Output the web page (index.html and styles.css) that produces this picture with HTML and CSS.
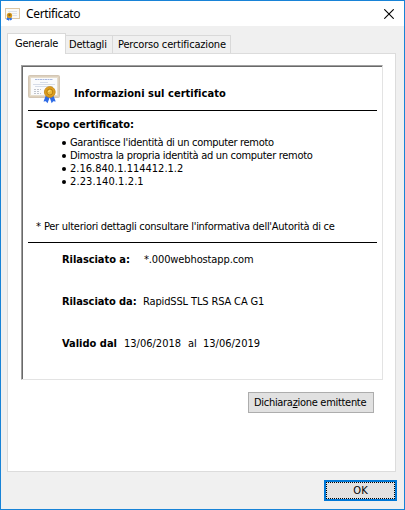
FILE: index.html
```html
<!DOCTYPE html>
<html lang="it">
<head>
<meta charset="utf-8">
<title>Certificato</title>
<link rel="stylesheet" href="styles.css">
</head>
<body>
<div class="window">
  <header class="titlebar">
    <svg class="small-icon" viewBox="0 0 16 14"><rect x=".5" y=".5" width="14" height="10" fill="#fbfaf7" stroke="#ddc7a4"/><path d="M3 3.500h9M7 5.500h5M8 7.500h4" stroke="#dfe2e8"/><path d="m2.500 8-1 4h1.500l1 1 .5-2 1 1.500 1.500-1-1-3.500z" fill="#2f72e8"/><circle cx="4.500" cy="7.500" r="2.700" fill="#d99b20"/><circle cx="4.500" cy="7" r="1.200" fill="#8d6a22"/></svg>
    <h1 class="title">Certificato</h1>
    <svg class="close" viewBox="0 0 10 10"><path d="m.3.3 9.400 9.400M9.700.3.300 9.700" stroke="#000" stroke-width="1.100"/></svg>
  </header>
  <nav class="tabs">
    <span class="tab active"><span class="t-gen">Generale</span></span>
    <span class="tab"><span class="t-det">Dettagli</span></span>
    <span class="tab"><span class="t-per">Percorso certificazione</span></span>
  </nav>
  <main class="panel">
    <section class="sheet">
      <div class="heading">
        <svg class="big-icon" viewBox="0 0 32 29">
          <rect x=".5" y=".5" width="31" height="22" rx="1" fill="#ddd0bd" stroke="#d3c6b4"/>
          <rect x="2.500" y="2.500" width="27" height="18" fill="#fafbfd" stroke="#e6dece"/>
          <path d="M7 4.500h18" stroke="#a9b8df" stroke-dasharray="2 .5"/>
          <path d="M12 7.500h8M5 9.500h22M7 11.500h18" stroke="#d6dce8"/>
          <path d="M6 14.500h7M6 16.500h5M6 18.500h7" stroke="#c0c4cc" stroke-dasharray="2 1"/>
          <path d="m18 20-2.500 6.500 2.300-.2 1.700 2 2.200-5.700 2 5.700 1.500-2 2.500.2-2.500-6.500z" fill="#2e6be6"/>
          <circle cx="21.800" cy="17" r="5.400" fill="#dd9d20" stroke="#c58812" stroke-width=".8"/>
          <circle cx="21.800" cy="17" r="3" fill="#edb838" stroke="#b8800f"/>
          <path d="m20.300 16.500 2-1" stroke="#fff0a5"/>
        </svg>
        <h2 class="t-info">Informazioni sul certificato</h2>
      </div>
      <div class="purpose">
        <h3 class="t-scopo">Scopo certificato:</h3>
        <ul>
          <li><span class="t-gar">Garantisce l'identità di un computer remoto</span></li>
          <li><span class="t-dim">Dimostra la propria identità ad un computer remoto</span></li>
          <li><span>2.16.840.1.114412.1.2</span></li>
          <li><span class="t-oid2">2.23.140.1.2.1</span></li>
        </ul>
        <p class="note"><span class="star">*</span><span class="t-note">Per ulteriori dettagli consultare l'informativa dell'Autorità di ce</span></p>
      </div>
      <div class="row first"><b class="t-a">Rilasciato a:</b><span class="v-a">*.000webhostapp.com</span></div>
      <div class="row"><b class="t-da">Rilasciato da:</b><span class="v-da">RapidSSL TLS RSA CA G1</span></div>
      <div class="row"><b class="t-val">Valido dal</b><span class="date">13/06/2018</span><span class="al">al</span><span class="date">13/06/2019</span></div>
    </section>
    <button class="statement"><span class="t-dic">Dichiara<u>z</u>ione emittente</span></button>
  </main>
  <button class="ok"><span class="ok-focus">OK</span></button>
</div>
</body>
</html>
```
FILE: styles.css
```css
* { box-sizing: border-box; margin: 0; padding: 0; }
body { width: 405px; height: 510px; overflow: hidden; font: 11px/13px "DejaVu Sans Condensed", "DejaVu Sans", sans-serif; font-stretch: condensed; color: #000; white-space: nowrap; }
h1, h2, h3 { font-size: 11px; }
.t-gen { letter-spacing: -.25px; }
.t-det { letter-spacing: -.2px; }
.t-per { letter-spacing: -.17px; }
.t-info { letter-spacing: .04px; }
.t-gar { letter-spacing: -.32px; }
.t-dim { letter-spacing: -.3px; }
.t-oid2 { letter-spacing: .1px; }
.t-note { letter-spacing: -.28px; }
.t-a { letter-spacing: -.05px; }
.t-da { letter-spacing: -.07px; }
.v-a { margin-left: 1px; letter-spacing: -.12px; }
.v-da { letter-spacing: -.14px; }
.t-dic { letter-spacing: -.3px; }
.window { width: 405px; height: 510px; border: 1px solid #1883d7; background: #f0f0f0; display: flex; flex-direction: column; }
.titlebar { height: 25px; flex: none; background: #fff; display: flex; align-items: center; padding: 0 10px 0 4px; }
.small-icon { width: 16px; height: 14px; margin-top: 2px; }
.title { font: 400 12px/16px "Noto Sans", sans-serif; letter-spacing: -.35px; margin-left: 5px; }
.close { width: 10px; height: 10px; margin-left: auto; }
.tabs { height: 27px; flex: none; display: flex; align-items: flex-end; padding-left: 6px; }
.tab { height: 18px; border: 1px solid #d9d9d9; border-bottom: 0; border-left: 0; padding: 2px 0 0 3px; width: 47px; }
.tab:last-child { width: 118px; padding-left: 5px; }
.tab.active { width: 59px; height: 21px; margin-bottom: -1px; border-left: 1px solid #d9d9d9; background: #fff; padding: 3px 0 0 7px; position: relative; }
.panel { width: 389px; height: 419px; flex: none; margin-left: 6px; border: 1px solid #dcdcdc; background: #fff; padding: 11px 0 0 13px; }
.sheet { width: 362px; height: 315px; border: 1px solid #e3e3e3; border-top-color: #a0a0a0; border-left-color: #a0a0a0; box-shadow: inset 1px 1px #696969; padding: 9px 5px 0 6px; }
.heading { height: 36px; border-bottom: 1px solid #000; display: flex; }
.big-icon { width: 32px; height: 29px; }
.heading h2 { margin: 12px 0 0 14px; }
.purpose { height: 132px; border-bottom: 1px solid #000; padding: 7px 0 0 8px; }
ul { list-style: none; padding: 5px 0 0 26px; }
li { display: flex; align-items: center; height: 13px; }
li::before { content: ""; width: 4px; height: 4px; border-radius: 50%; background: #000; margin: 1px 4px 0 0; }
.note { display: flex; width: 299px; margin-top: 32px; }
.star { width: 8px; flex: none; }
.row { display: flex; padding-left: 34px; margin-top: 29px; }
.row.first { margin-top: 10px; }
.row b { width: 81px; }
.row .t-val { width: 62px; }
.date { width: 64px; }
.al { width: 15px; }
button { font: inherit; color: inherit; background: #e1e1e1; border: 1px solid #adadad; }
.statement { display: block; width: 126px; height: 21px; margin: 12px 0 0 227px; text-align: left; padding-left: 5px; }
.ok { width: 73px; height: 21px; border: 2px solid #0078d7; margin: 8px 0 0 323px; flex: none; }
.ok-focus { display: block; height: 17px; border: 1px dotted #000; line-height: 16px; }
```
